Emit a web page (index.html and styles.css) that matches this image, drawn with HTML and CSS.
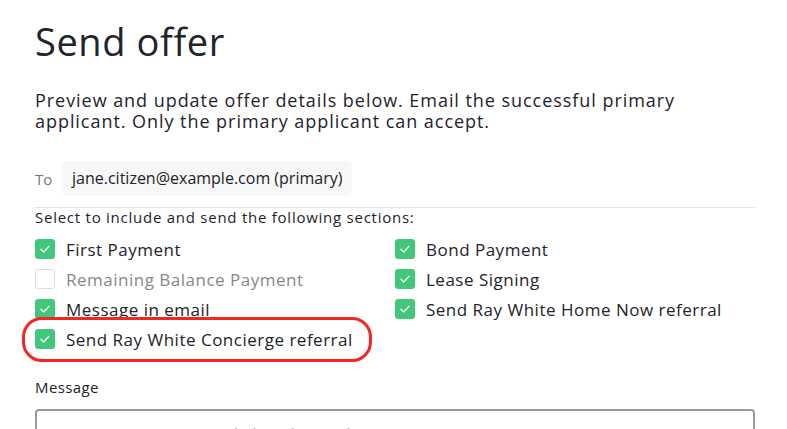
FILE: index.html
```html
<!DOCTYPE html>
<html lang="en">
<head>
    <meta charset="UTF-8">
    <meta name="viewport" content="width=device-width, initial-scale=1.0">
    <title>Send offer</title>
    <link rel="stylesheet" href="styles.css">
</head>
<body>
    <div class="panel">
        <h1>Send offer</h1>
        <p class="intro">Preview and update offer details below. Email the successful primary applicant. Only the primary applicant can accept.</p>

        <div class="to-row">
            <span class="to-label">To</span>
            <span class="recipient">jane.citizen@example.com (primary)</span>
        </div>

        <div class="sections">
            <p class="sections-title">Select to include and send the following sections:</p>
            <div class="options">
                <label class="option"><span class="box checked"><svg viewBox="0 0 20 20"><path d="M5.5 10.3l3 3 6-6.3"/></svg></span>First Payment</label>
                <label class="option"><span class="box checked"><svg viewBox="0 0 20 20"><path d="M5.5 10.3l3 3 6-6.3"/></svg></span>Bond Payment</label>
                <label class="option disabled"><span class="box"></span>Remaining Balance Payment</label>
                <label class="option"><span class="box checked"><svg viewBox="0 0 20 20"><path d="M5.5 10.3l3 3 6-6.3"/></svg></span>Lease Signing</label>
                <label class="option"><span class="box checked"><svg viewBox="0 0 20 20"><path d="M5.5 10.3l3 3 6-6.3"/></svg></span>Message in email</label>
                <label class="option"><span class="box checked"><svg viewBox="0 0 20 20"><path d="M5.5 10.3l3 3 6-6.3"/></svg></span>Send Ray White Home Now referral</label>
                <label class="option highlight"><span class="box checked"><svg viewBox="0 0 20 20"><path d="M5.5 10.3l3 3 6-6.3"/></svg></span>Send Ray White Concierge referral</label>
            </div>
        </div>

        <label class="field-label" for="message">Message</label>
        <textarea id="message" placeholder="Enter your message to include in the email"></textarea>
    </div>
</body>
</html>
```

FILE: styles.css
```css
body {
    font-family: "Open Sans", Arial, sans-serif;
    background-color: #fff;
    color: #23232b;
    margin: 0;
    padding: 0 32px 0 35px;
}
.panel {
    width: 720px;
}
h1 {
    font-size: 38px;
    font-weight: 500;
    margin: 17px 0 0;
    line-height: 48px;
    letter-spacing: 0.6px;
}
.intro {
    font-size: 18px;
    line-height: 21px;
    margin: 25px 0 0;
    max-width: 680px;
    letter-spacing: 0.95px;
}
.to-row {
    display: flex;
    align-items: center;
    margin-top: 29px;
    padding-bottom: 11px;
    border-bottom: 1px solid #e2e2e2;
}
.to-label {
    font-size: 15px;
    color: #777;
    width: 27px;
}
.recipient {
    background-color: #f7f7f7;
    border-radius: 5px;
    padding: 8px 10px;
    font-size: 16px;
    line-height: 19px;
}
.sections-title {
    font-size: 15px;
    margin: 0 0 8px;
    line-height: 18px;
    letter-spacing: 0.75px;
}
.options {
    display: grid;
    grid-template-columns: 360px 360px;
}
.option {
    display: flex;
    align-items: center;
    height: 30px;
    font-size: 17px;
    letter-spacing: 0.5px;
}
.option.disabled {
    color: #888;
}
.box {
    width: 18px;
    height: 18px;
    border: 1px solid #ddd;
    border-radius: 3px;
    margin-right: 11px;
    display: flex;
    align-items: center;
    justify-content: center;
}
.box.checked {
    background-color: #3fc87a;
    border-color: #3fc87a;
}
.box svg {
    width: 18px;
    height: 18px;
    fill: none;
    stroke: #fff;
    stroke-width: 1.4;
    stroke-linecap: round;
    stroke-linejoin: round;
}
.highlight {
    position: relative;
}
.highlight::after {
    content: "";
    position: absolute;
    left: -13px;
    top: -7px;
    width: 344px;
    height: 39px;
    border: 3px solid #f4261f;
    border-radius: 20px;
}
.field-label {
    display: block;
    font-size: 15px;
    margin-top: 24px;
    line-height: 18px;
    letter-spacing: 0.4px;
}
textarea {
    display: block;
    box-sizing: border-box;
    width: 720px;
    height: 80px;
    margin-top: 13px;
    border: 2px solid #9a9a9a;
    border-radius: 4px;
    padding: 12px 16px;
    font-family: "Open Sans", Arial, sans-serif;
    font-size: 15px;
    resize: none;
}
textarea::placeholder {
    color: #999;
}
```
